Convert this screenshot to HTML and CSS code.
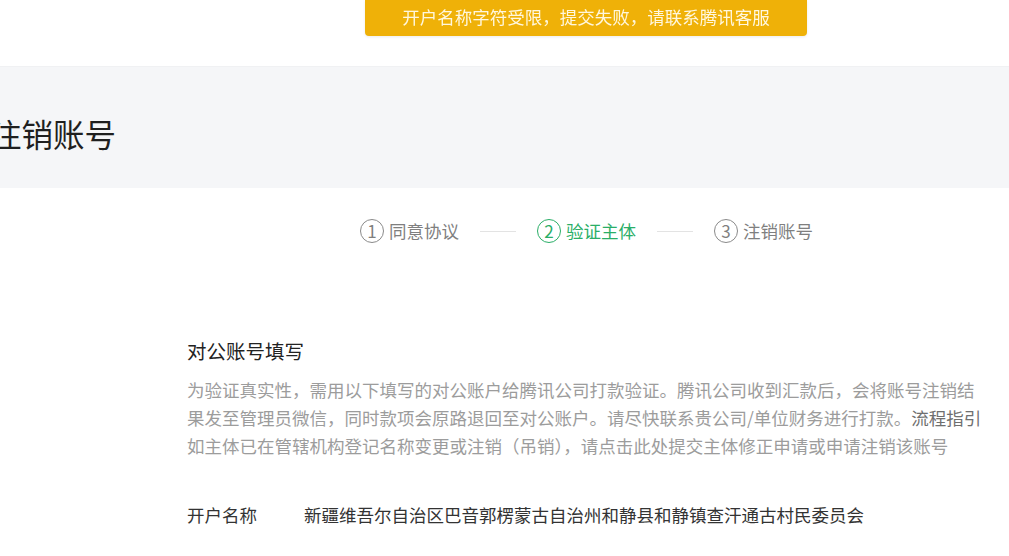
FILE: index.html
```html
<!DOCTYPE html>
<html lang="zh-CN">
<head>
  <meta charset="UTF-8" />
  <meta name="viewport" content="width=device-width, initial-scale=1.0"/>
  <title>注销账号</title>
  <link rel="stylesheet" href="styles.css">
</head>
<body>
  <!-- Top toast -->
  <div class="toast">开户名称字符受限，提交失败，请联系腾讯客服</div>

  <div class="page-header">
    <h1>注销账号</h1>
  </div>

  <!-- Steps -->
  <div class="steps">
    <div class="step">
      <span class="step-num">1</span>
      <span class="step-text">同意协议</span>
    </div>
    <div class="step-line"></div>
    <div class="step active">
      <span class="step-num">2</span>
      <span class="step-text">验证主体</span>
    </div>
    <div class="step-line"></div>
    <div class="step">
      <span class="step-num">3</span>
      <span class="step-text">注销账号</span>
    </div>
  </div>

  <div class="section">
    <h3 class="section-title">对公账号填写</h3>
    <p class="section-desc">为验证真实性，需用以下填写的对公账户给腾讯公司打款验证。腾讯公司收到汇款后，会将账号注销结果发至管理员微信，同时款项会原路退回至对公账户。请尽快联系贵公司/单位财务进行打款。<a href="#" class="guide">流程指引</a>如主体已在管辖机构登记名称变更或注销（吊销），请<a href="#" class="plain-link">点击此处</a>提交主体修正申请或申请注销该账号</p>

    <div class="form-row">
      <label class="form-label">开户名称</label>
      <span class="form-value">新疆维吾尔自治区巴音郭楞蒙古自治州和静县和静镇查汗通古村民委员会</span>
    </div>
  </div>
</body>
</html>
```

FILE: styles.css
```css
body {
  margin: 0;
  font-family: "Microsoft YaHei", "Noto Sans CJK SC", sans-serif;
  background: #fff;
  color: #333;
  overflow: hidden;
}

.toast {
  position: fixed;
  top: 0;
  left: 365px;
  width: 442px;
  height: 36px;
  line-height: 34px;
  background-color: #efb108;
  color: #fff7de;
  font-size: 17.5px;
  text-align: center;
  border-radius: 0 0 4px 4px;
  box-shadow: 0 1px 3px rgba(0, 0, 0, 0.08);
}

.page-header {
  margin-top: 66px;
  height: 122px;
  background-color: #f5f6f8;
  border-top: 1px solid #f0f1f3;
  box-sizing: border-box;
  display: flex;
  align-items: center;
  overflow: hidden;
}

.page-header h1 {
  margin: 0 0 0 -10px;
  font-size: 31.5px;
  font-weight: normal;
  color: #1f1f1f;
  line-height: 40px;
  padding-top: 10px;
}

.steps {
  display: flex;
  align-items: center;
  padding-left: 360px;
  margin-top: 31px;
  height: 24px;
}

.step {
  display: flex;
  align-items: center;
  color: #7f7f7f;
}

.step-num {
  width: 22px;
  height: 22px;
  border: 1px solid #8a8a8a;
  border-radius: 50%;
  font-size: 17px;
  line-height: 22px;
  text-align: center;
  margin-right: 5px;
}

.step-text {
  font-size: 17.5px;
  line-height: 24px;
}

.step.active {
  color: #2aae67;
}

.step.active .step-num {
  border-color: #2aae67;
}

.step-line {
  width: 36px;
  height: 1px;
  background-color: #e3e3e3;
  margin: 0 21px;
}

.section {
  padding-left: 187px;
  margin-top: 94px;
}

.section-title {
  margin: 0;
  font-size: 19.5px;
  font-weight: normal;
  line-height: 28px;
  color: #222;
}

.section-desc {
  margin: 11px 0 0;
  width: 800px;
  font-size: 17.5px;
  line-height: 28px;
  color: #9c9c9c;
}

.section-desc a {
  text-decoration: none;
}

.section-desc .guide {
  color: #6f6f6f;
  white-space: nowrap;
}

.section-desc .plain-link {
  color: #9c9c9c;
}

.form-row {
  display: flex;
  margin-top: 41px;
  font-size: 17.5px;
  line-height: 28px;
  color: #333;
}

.form-label {
  width: 117px;
}
```
